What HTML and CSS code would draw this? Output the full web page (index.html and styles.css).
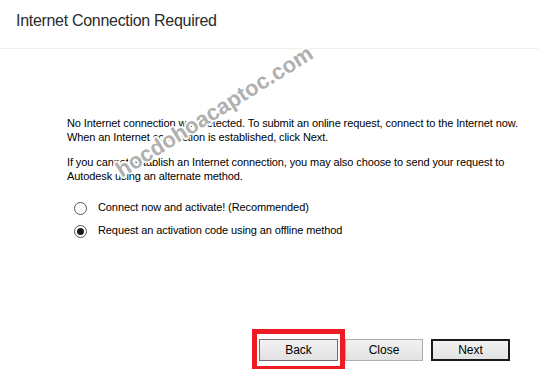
FILE: index.html
```html
<!DOCTYPE html>
<html lang="en">
<head>
  <meta charset="UTF-8" />
  <title>Internet Connection Required</title>
  <link rel="stylesheet" href="styles.css">
</head>
<body>
  <header class="title-bar">
    <h1>Internet Connection Required</h1>
  </header>

  <main class="content">
    <p>No Internet connection was detected. To submit an online request, connect to the Internet now.<br>When an Internet connection is established, click Next.</p>
    <p>If you cannot establish an Internet connection, you may also choose to send your request to<br>Autodesk using an alternate method.</p>

    <div class="options">
      <label class="option"><span class="radio"></span>Connect now and activate! (Recommended)</label>
      <label class="option"><span class="radio checked"></span>Request an activation code using an offline method</label>
    </div>
  </main>

  <footer class="actions">
    <span class="highlight"><button class="btn">Back</button></span>
    <button class="btn">Close</button>
    <button class="btn default">Next</button>
  </footer>

  <div class="watermark">hocdohoacaptoc.com</div>
</body>
</html>
```

FILE: styles.css
```css
* {
  box-sizing: border-box;
  margin: 0;
  padding: 0;
}

body {
  width: 538px;
  height: 369px;
  background: #ffffff;
  font-family: 'Liberation Sans', Arial, sans-serif;
  color: #000;
  position: relative;
  overflow: hidden;
}

.title-bar {
  height: 49px;
  border-bottom: 1px solid #efefef;
  padding: 12px 0 0 16px;
}

.title-bar h1 {
  font-weight: normal;
  font-size: 16px;
  letter-spacing: -0.3px;
  color: #2b2b2b;
}

.content {
  padding: 67px 0 0 67px;
  font-size: 11px;
  line-height: 14px;
  letter-spacing: -0.1px;
  white-space: nowrap;
}

.content p {
  margin-bottom: 11px;
}

.options {
  padding: 6px 0 0 7px;
  display: flex;
  flex-direction: column;
  gap: 10px;
}

.option {
  display: flex;
  align-items: center;
  gap: 11px;
  height: 13px;
}

.radio {
  width: 13px;
  height: 13px;
  border: 1px solid #555;
  border-radius: 50%;
  background: #fff;
  display: flex;
  align-items: center;
  justify-content: center;
  margin-top: 4px;
}

.radio.checked::after {
  content: "";
  width: 7px;
  height: 7px;
  border-radius: 50%;
  background: #1a1a1a;
}

.actions {
  position: absolute;
  left: 252px;
  top: 329px;
  display: flex;
  align-items: center;
}

.highlight {
  border: 5px solid #ed1c24;
  padding: 5px 2px;
  display: flex;
}

.btn {
  width: 78px;
  height: 22px;
  font-family: 'Liberation Sans', Arial, sans-serif;
  font-size: 12px;
  color: #000;
  background: linear-gradient(#f2f2f2, #e2e2e2);
  border: 1px solid #adadad;
}

.highlight .btn {
  width: 79px;
  border-color: #707070;
}

.btn.default {
  width: 79px;
  margin-left: 8px;
  border: 2px solid #1a1a1a;
}

.watermark {
  position: absolute;
  left: 125px;
  top: 157px;
  font-size: 22px;
  font-weight: bold;
  color: #b0b0b0;
  text-shadow: 1px 1px 0 #fff, -1px -1px 0 #fff, 1px -1px 0 #fff, -1px 1px 0 #fff, 2px 0 0 #fff, -2px 0 0 #fff, 0 2px 0 #fff, 0 -2px 0 #fff;
  transform: rotate(-32deg);
  transform-origin: left bottom;
  white-space: nowrap;
}
```
